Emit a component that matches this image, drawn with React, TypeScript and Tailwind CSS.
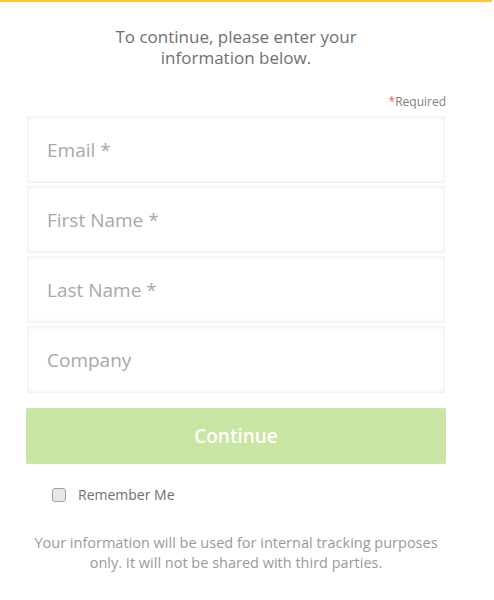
import { useState } from 'react';

const fields = ['Email *', 'First Name *', 'Last Name *', 'Company'];

export default function App() {
  const [remember, setRemember] = useState(false);

  return (
    <div className="min-h-[600px] w-[494px] bg-white font-['Open_Sans',sans-serif]">
      <div className="h-[2px] w-[492px] bg-[#fcc53a]" />
      <div className="ml-[26px] w-[420px] pt-[24px]">
        <p className="px-[80px] text-center text-[17px] leading-[21px] text-[#707070]">
          To continue, please enter your information below.
        </p>
        <p className="mt-[26px] text-right text-[12px] leading-[16px] text-[#808080]">
          <span className="text-[#e85a5a]">*</span>Required
        </p>
        <div className="mt-[6px] flex flex-col gap-[3px] pl-[1px] pr-[1px]">
          {fields.map((f) => (
            <input
              key={f}
              placeholder={f}
              className="h-[67px] w-full border border-[#f2f2f2] bg-white px-[19px] text-[19px] text-[#555] shadow-[inset_0_0_4px_rgba(0,0,0,0.07)] outline-none placeholder:text-[#a8a8a8]"
            />
          ))}
        </div>
        <button className="mt-[15px] h-[56px] w-full rounded-[2px] bg-[#c9e5a4] text-[19px] font-semibold text-white">
          Continue
        </button>
        <label className="mt-[21px] flex items-center gap-[12px] pl-[26px]">
          <input
            type="checkbox"
            checked={remember}
            onChange={(e) => setRemember(e.target.checked)}
            className="h-[14px] w-[14px] appearance-none rounded-[3px] border border-[#a0a0a0] bg-[#e8e8e8]"
          />
          <span className="text-[14px] leading-[20px] text-[#707070]">Remember Me</span>
        </label>
        <p className="mt-[28px] text-center text-[14.5px] leading-[20px] text-[#9a9a9a]">
          Your information will be used for internal tracking purposes only. It will not be shared with third parties.
        </p>
      </div>
    </div>
  );
}
